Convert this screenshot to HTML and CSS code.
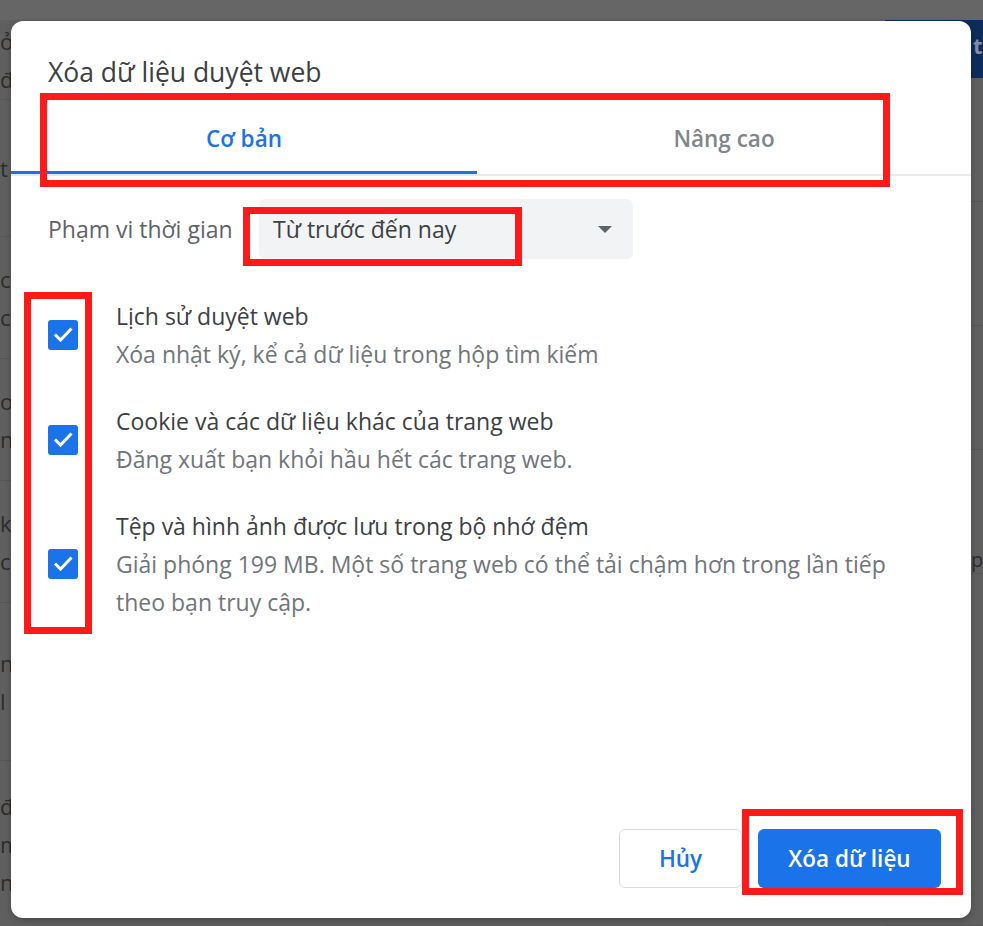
FILE: index.html
```html
<!DOCTYPE html>
<html lang="vi">
<head>
    <meta charset="UTF-8">
    <title>Xóa dữ liệu duyệt web</title>
    <link rel="stylesheet" href="styles.css">
</head>
<body>
    <div class="page">
        <div class="page_top"></div>
        <div class="page_main">
            <div class="page_list">
                <div class="page_row row_a"><span>ở</span><span>đ</span></div>
                <div class="page_row row_b"><span>t</span></div>
                <div class="page_row row_c"><span>c</span><span>c</span></div>
                <div class="page_row row_c"><span>ơn</span><span>n</span></div>
                <div class="page_row row_c"><span>k</span><span>cl</span></div>
                <div class="page_row row_d"><span>n</span><span>l</span></div>
                <div class="page_row row_e"><span>đ</span><span>m</span><span>ng</span></div>
            </div>
            <div class="page_side">
                <div class="side_banner">t</div>
                <div class="side_row"></div>
                <div class="side_row"></div>
                <div class="side_row"></div>
                <div class="side_row"><span>p</span></div>
                <div class="side_row"></div>
            </div>
        </div>
    </div>

    <div class="dialog">
        <div class="dialog_title">Xóa dữ liệu duyệt web</div>

        <div class="tabs">
            <div class="tab tab_active">Cơ bản</div>
            <div class="tab">Nâng cao</div>
        </div>

        <div class="range_row">
            <div class="range_label">Phạm vi thời gian</div>
            <div class="range_select">
                <span>Từ trước đến nay</span>
                <span class="arrow"></span>
            </div>
        </div>

        <div class="items">
            <div class="item">
                <div class="checkbox">
                    <svg width="30" height="30" viewBox="0 0 30 30"><path d="M7 14.5l5.5 5.5L23.5 8.5" fill="none" stroke="#fff" stroke-width="3"/></svg>
                </div>
                <div class="item_text">
                    <div class="item_title">Lịch sử duyệt web</div>
                    <div class="item_desc">Xóa nhật ký, kể cả dữ liệu trong hộp tìm kiếm</div>
                </div>
            </div>
            <div class="item">
                <div class="checkbox">
                    <svg width="30" height="30" viewBox="0 0 30 30"><path d="M7 14.5l5.5 5.5L23.5 8.5" fill="none" stroke="#fff" stroke-width="3"/></svg>
                </div>
                <div class="item_text">
                    <div class="item_title">Cookie và các dữ liệu khác của trang web</div>
                    <div class="item_desc">Đăng xuất bạn khỏi hầu hết các trang web.</div>
                </div>
            </div>
            <div class="item">
                <div class="checkbox">
                    <svg width="30" height="30" viewBox="0 0 30 30"><path d="M7 14.5l5.5 5.5L23.5 8.5" fill="none" stroke="#fff" stroke-width="3"/></svg>
                </div>
                <div class="item_text">
                    <div class="item_title">Tệp và hình ảnh được lưu trong bộ nhớ đệm</div>
                    <div class="item_desc">Giải phóng 199 MB. Một số trang web có thể tải chậm hơn trong lần tiếp theo bạn truy cập.</div>
                </div>
            </div>
        </div>

        <div class="footer">
            <button class="btn btn_cancel">Hủy</button>
            <button class="btn btn_clear">Xóa dữ liệu</button>
        </div>

        <!-- red highlight boxes drawn on top of the screenshot -->
        <div class="mark mark_tabs"></div>
        <div class="mark mark_select"></div>
        <div class="mark mark_checks"></div>
        <div class="mark mark_button"></div>
    </div>
</body>
</html>
```

FILE: styles.css
```css
* {
    font-family: "Open Sans", "Noto Sans", sans-serif;
    box-sizing: border-box;
}
body {
    margin: 0;
    width: 983px;
    height: 926px;
    overflow: hidden;
    background-color: #5f5f5f;
    position: relative;
}

/* dimmed page behind the dialog */
.page {
    display: flex;
    flex-direction: column;
    height: 926px;
}
.page_top {
    height: 20px;
    background-color: #666;
    flex-shrink: 0;
}
.page_main {
    display: flex;
    flex: 1;
}
.page_list {
    flex: 1;
    display: flex;
    flex-direction: column;
}
.page_row {
    display: flex;
    flex-direction: column;
    justify-content: center;
    gap: 10px;
    border-bottom: 1px solid #565656;
    color: #2c2c2c;
    font-size: 22px;
    line-height: 28px;
}
.row_a { height: 80px; }
.row_b { height: 137px; }
.row_c { height: 122px; }
.row_d { height: 158px; }
.row_e { flex: 1; border-bottom: none; }

.page_side {
    width: 98px;
    display: flex;
    flex-direction: column;
}
.side_banner {
    height: 58px;
    background-color: #0d2c5a;
    color: #7f8ea6;
    font-size: 22px;
    font-weight: bold;
    padding: 10px 0 0 88px;
}
.side_row {
    height: 124px;
    border-bottom: 1px solid #555;
    color: #2c2c2c;
    font-size: 20px;
    padding: 0 0 0 86px;
    display: flex;
    align-items: flex-end;
}
.side_row:last-child {
    flex: 1;
}

/* dialog */
.dialog {
    position: absolute;
    left: 11px;
    top: 21px;
    width: 960px;
    height: 897px;
    background-color: #fff;
    border-radius: 12px;
    display: flex;
    flex-direction: column;
    box-shadow: 0 2px 6px rgba(0, 0, 0, 0.25);
}
.dialog_title {
    padding: 33px 0 0 37px;
    font-size: 26.5px;
    line-height: 36px;
    color: #3c4043;
}
.tabs {
    display: flex;
    margin-top: 7px;
    border-bottom: 2px solid #e8eaed;
}
.tab {
    height: 77px;
    display: flex;
    align-items: center;
    justify-content: center;
    padding-top: 8px;
    font-size: 22.5px;
    font-weight: 600;
    color: #80868b;
    border-bottom: 3px solid transparent;
    flex: 1;
}
.tab_active {
    flex: 0 0 466px;
    color: #1a73e8;
    border-bottom-color: #1a73e8;
}

.range_row {
    display: flex;
    align-items: center;
    margin-top: 23px;
    padding-left: 37px;
}
.range_label {
    width: 211px;
    font-size: 23px;
    color: #5f6368;
}
.range_select {
    width: 374px;
    height: 60px;
    background-color: #f1f3f4;
    border-radius: 6px;
    display: flex;
    align-items: center;
    justify-content: space-between;
    padding: 0 21px 0 14px;
    font-size: 23px;
    color: #3c4043;
}
.arrow {
    width: 0;
    height: 0;
    border-left: 7px solid transparent;
    border-right: 7px solid transparent;
    border-top: 7px solid #5f6368;
}

.items {
    display: flex;
    flex-direction: column;
    gap: 29px;
    margin-top: 38px;
    padding: 0 48px 0 37px;
}
.item {
    display: flex;
    align-items: center;
    gap: 38px;
}
.checkbox {
    width: 30px;
    height: 30px;
    border-radius: 3px;
    background-color: #1a73e8;
    flex-shrink: 0;
}
.checkbox svg {
    display: block;
}
.item_text {
    font-size: 23px;
    line-height: 38px;
}
.item_title {
    color: #3c4043;
}
.item_desc {
    color: #70757a;
}

.footer {
    margin-top: auto;
    display: flex;
    justify-content: flex-end;
    gap: 16px;
    padding: 0 30px 30px 0;
}
.btn {
    height: 59px;
    border-radius: 6px;
    font-size: 22.5px;
    font-weight: 600;
    cursor: pointer;
}
.btn_cancel {
    width: 123px;
    background-color: #fff;
    color: #1a73e8;
    border: 1px solid #dadce0;
}
.btn_clear {
    width: 183px;
    background-color: #1a73e8;
    color: #fff;
    border: none;
}

.mark {
    position: absolute;
    border: 7px solid #ff1a1a;
}
.mark_tabs {
    left: 29px;
    top: 72px;
    width: 850px;
    height: 94px;
}
.mark_select {
    left: 232px;
    top: 186px;
    width: 279px;
    height: 59px;
}
.mark_checks {
    left: 13px;
    top: 271px;
    width: 68px;
    height: 342px;
}
.mark_button {
    left: 731px;
    top: 788px;
    width: 221px;
    height: 86px;
}
```
